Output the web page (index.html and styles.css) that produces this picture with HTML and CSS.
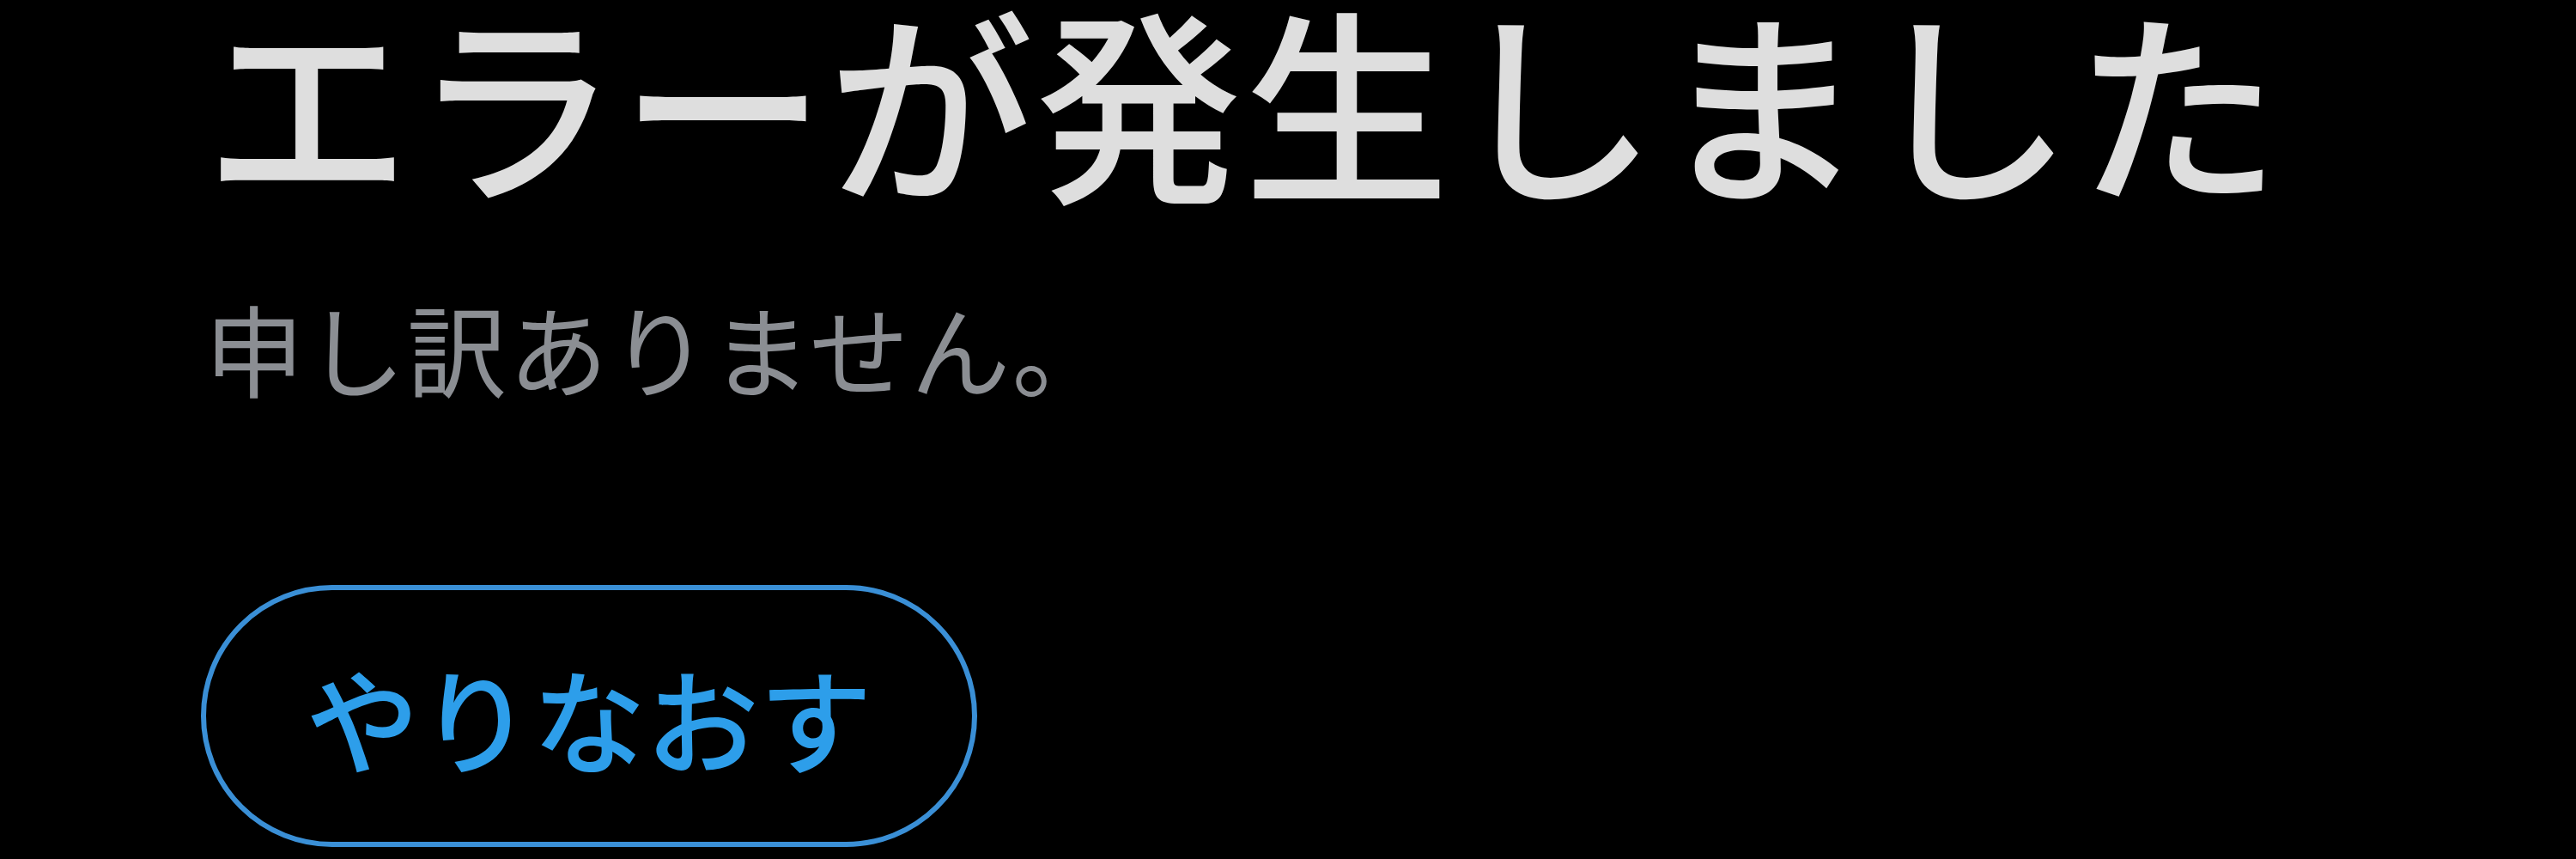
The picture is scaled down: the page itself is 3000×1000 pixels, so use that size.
FILE: index.html
```html
<!DOCTYPE html>
<html lang="ja">
<head>
<meta charset="utf-8">
<link rel="stylesheet" href="styles.css">
</head>
<body>
<main class="error">
  <h1 class="error-title">エラーが発生しました</h1>
  <p class="error-message">申し訳ありません。</p>
  <button class="retry-button" type="button">やりなおす</button>
</main>
</body>
</html>
```

FILE: styles.css
```css
html, body {
  margin: 0;
  padding: 0;
  background: #000;
}
body {
  font-family: "Noto Sans CJK JP", "Noto Sans", sans-serif;
}
.error {
  display: flex;
  flex-direction: column;
  align-items: flex-start;
  padding: 0 0 0 238px;
}
.error-title {
  margin: 0;
  font-size: 240px;
  line-height: 0.95;
  font-weight: 500;
  letter-spacing: 2px;
  color: #dedede;
}
.error-message {
  margin: 117px 0 0 0;
  font-size: 116px;
  line-height: 1;
  font-weight: 400;
  letter-spacing: 2px;
  color: #8b8e93;
}
.retry-button {
  margin: 220px 0 0 -4px;
  height: 305px;
  box-sizing: border-box;
  padding: 0 116px;
  display: inline-flex;
  align-items: center;
  border: 6px solid #3a8fd6;
  border-radius: 200px;
  background: #000;
  color: #2d9eea;
  font-family: "Noto Sans CJK JP", "Noto Sans", sans-serif;
  font-size: 132px;
  font-weight: 500;
  line-height: 1;
}
```
